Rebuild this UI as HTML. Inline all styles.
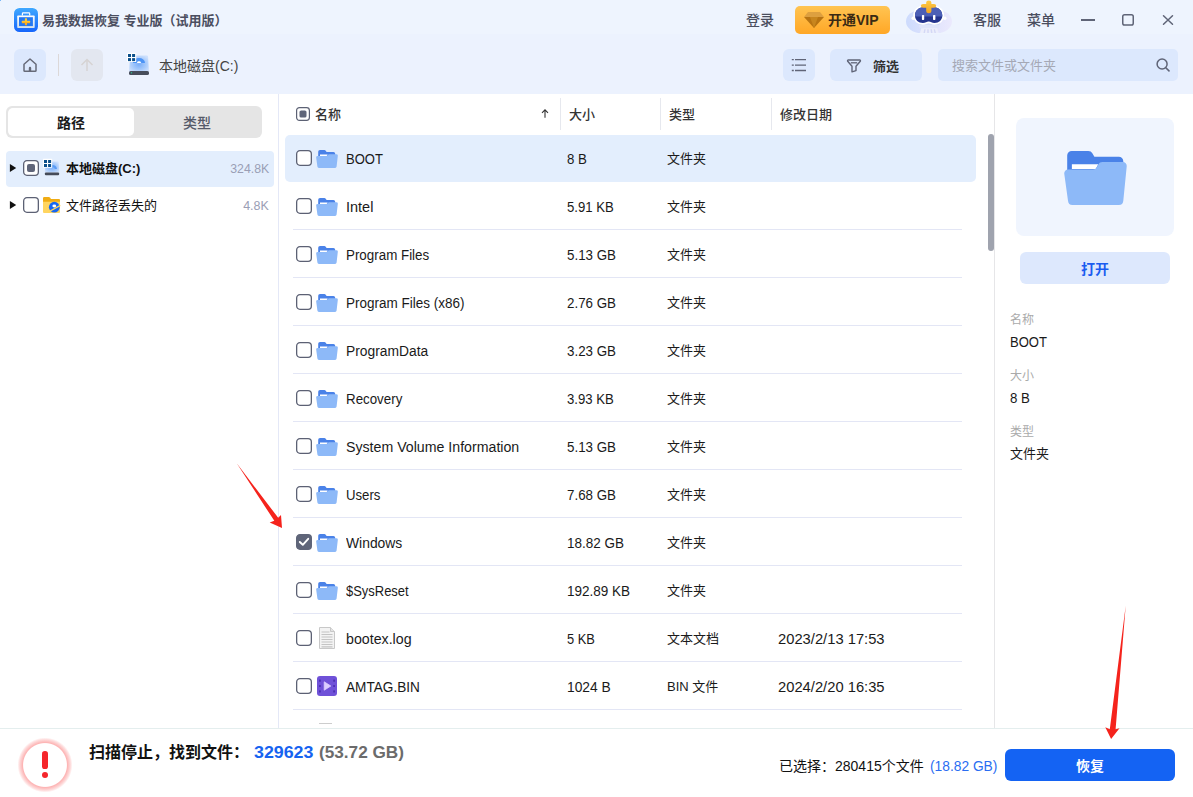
<!DOCTYPE html>
<html lang="zh-CN">
<head>
<meta charset="utf-8">
<title>易我数据恢复 专业版 (试用版)</title>
<style>
*{box-sizing:border-box;margin:0;padding:0}
html,body{width:1193px;height:797px;overflow:hidden;background:#fff}
body{font-family:"Liberation Sans","Noto Sans CJK SC",sans-serif;font-size:14px;color:#1a1a1a;position:relative}
.abs{position:absolute}
#top{left:0;top:0;width:1193px;height:94px;background:linear-gradient(#eef4fe 0,#eef4fe 34px,#ecf2fe 34px,#ecf2fe 100%)}
.t{position:absolute;white-space:nowrap;line-height:20px;height:20px;transform-origin:0 50%}
.btn{position:absolute;border-radius:6px}
/* left */
#tabs{left:6px;top:106px;width:256px;height:32px;border-radius:6px;background:#e5e5e5}
#tabA{left:8px;top:108px;width:126px;height:28px;border-radius:5px;background:#fff}
.trow{position:absolute;left:6px;width:268px;height:36px;border-radius:4px}
.cb{position:absolute;width:16px;height:16px;border-radius:3.500px;background:#fff;box-shadow:inset 0 0 0 1.400px #5c6174}
.line{position:absolute;left:293px;width:669px;height:1px;background:#e3e6f5}
.row{position:absolute;left:285px;width:691px;height:47px}
.row .t{top:14px}
.row .c{font-size:13px}
.gray{color:#aaa}
</style>
</head>
<body>
<div id="top" class="abs"></div>
<div class="abs" style="left:0;top:0;width:1px;height:1px;background:#7ab8f8"></div>

<!-- title bar -->
<svg class="abs" style="left:13px;top:7px" width="26" height="26" viewBox="-1 -1 26 26">
<defs><linearGradient id="lg" x1="0" y1="0" x2="0" y2="1"><stop offset="0" stop-color="#3fa8ff"/><stop offset="1" stop-color="#1766fb"/></linearGradient><linearGradient id="lg2" x1="0" y1="0" x2="0" y2="1"><stop offset="0" stop-color="#ffffff"/><stop offset="1" stop-color="#d3e1ec"/></linearGradient><linearGradient id="lg3" x1="0" y1="0" x2="0" y2="1"><stop offset="0" stop-color="#ffd43a"/><stop offset="1" stop-color="#ffa414"/></linearGradient></defs>
<rect x="-.5" y="-.5" width="25" height="25" rx="6" fill="#fff" opacity=".75"/><rect width="24" height="24" rx="5.500" fill="url(#lg)"/>
<path d="M8.400 7.600V5.600a.8.800 0 0 1 .8-.8h5.700a.8.800 0 0 1 .8.800V7.600" fill="none" stroke="#fff" stroke-width="1.200"/>
<rect x="3.200" y="7.400" width="17.500" height="12.700" rx=".8" fill="url(#lg2)"/>
<rect x="5" y="9.200" width="13.900" height="8.900" fill="#2478f2"/>
<rect x="10.900" y="10.200" width="2.100" height="7.100" rx=".5" fill="url(#lg3)"/><rect x="7.800" y="12.800" width="8.300" height="2.400" rx=".5" fill="url(#lg3)"/>
</svg>
<div class="t" style="left:42px;top:11px;font-size:13px;font-weight:700;color:#4b4e60">易我数据恢复 专业版（试用版）</div>

<div class="t" style="left:746px;top:10px;font-size:14px;font-weight:500;color:#4a4e5e">登录</div>
<div class="btn" style="left:795px;top:6px;width:95px;height:28px;background:linear-gradient(#ffc452,#ffa726);border-radius:5px"></div>
<svg class="abs" style="left:804px;top:12px" width="20" height="16" viewBox="0 0 20 16"><path d="M0 5h20L10 16z" fill="#b87412"/><path d="M4 0h12l4 5H0z" fill="#dda040"/><path d="M6 5l4 11 4-11z" fill="#c8861e"/></svg>
<div class="t" style="left:828px;top:10px;font-size:14px;font-weight:700;color:#3a2a14">开通VIP</div>

<!-- robot avatar -->
<svg class="abs" style="left:900px;top:0" width="60" height="36" viewBox="900 0 60 36">
<defs><linearGradient id="rg" x1="0" y1="0" x2="1" y2="0"><stop offset="0" stop-color="#cddbfd"/><stop offset=".55" stop-color="#dfe3fc"/><stop offset="1" stop-color="#ebe9fd"/></linearGradient>
<linearGradient id="sg" x1="0" y1="0" x2="0" y2="1"><stop offset="0" stop-color="#ffcb45"/><stop offset="1" stop-color="#f0a426"/></linearGradient></defs>
<rect x="906" y="10" width="46" height="23" rx="15" ry="11.500" fill="url(#rg)"/>
<path d="M920 33l1.300-4.800h15.800L938.700 33z" fill="#eceefb"/>
<path d="M923.500 33l.8-3.800h1.400l-.8 3.800zM927.300 33v-3.800h1.400V33zM931 33l-.5-3.800h1.400l.6 3.800zM934.500 33l-.8-3.800h1.300l.9 3.800z" fill="#d3d8f5"/>
<path d="M918.600 22h21.100l-.8 5.200a1 1 0 0 1-1 .8h-17.500a1 1 0 0 1-1-.8z" fill="#dfe5fb"/>
<path d="M918.600 22.500h21.100l-.3 2.500h-20.500z" fill="#c9d3f8" opacity=".6"/>
<path d="M915 15.500c0-5 4-8.500 9.500-8.500h8.300c5.500 0 9.500 3.500 9.500 8.500 0 4.600-3.300 7.400-7.800 7.400-2.600 0-3.800-1.400-5.800-1.400s-3.200 1.400-5.800 1.400c-4.500 0-7.900-2.800-7.900-7.400z" fill="#fff" stroke="#fff" stroke-width="3.600" stroke-linejoin="round"/><circle cx="913.200" cy="18.300" r="1.700" fill="#fff"/><circle cx="944.800" cy="18.300" r="1.700" fill="#fff"/>
<path d="M915 15.500c0-5 4-8.500 9.500-8.500h8.300c5.500 0 9.500 3.500 9.500 8.500 0 4.600-3.300 7.400-7.800 7.400-2.600 0-3.800-1.400-5.800-1.400s-3.200 1.400-5.800 1.400c-4.500 0-7.900-2.800-7.900-7.400z" fill="#25358f"/>
<path d="M915 15.500c0-5 4-8.500 9.500-8.500h8.300c5.500 0 9.500 3.500 9.500 8.500 0 .4 0 .8-.1 1.100h-27.100c-.1-.3-.1-.7-.1-1.100z" fill="#4c5fb6"/>
<rect x="921.900" y="15.100" width="2.300" height="4.800" rx=".7" fill="#fff"/><rect x="933" y="15.100" width="2.400" height="4.800" rx=".7" fill="#fff"/>
<path d="M926.200 2.600a2.600 2.100 0 0 1 5.200 0v1.300h2.600a2.200 1.950 0 0 1 0 3.900h-2.600v3.500a2.600 2 0 0 1-5.200 0V7.800h-3.100a2.200 1.950 0 0 1 0-3.900h3.100z" fill="url(#sg)"/>
</svg>

<div class="t" style="left:973px;top:10px;font-size:14px;font-weight:500;color:#4a4e5e">客服</div>
<div class="t" style="left:1027px;top:10px;font-size:14px;font-weight:500;color:#4a4e5e">菜单</div>
<div class="abs" style="left:1081px;top:19.200px;width:14px;height:1.600px;background:#5f6477"></div>
<svg class="abs" style="left:1121px;top:13px" width="14" height="14" viewBox="0 0 14 14"><rect x="1.750" y="1.750" width="10.500" height="10.200" rx="1.800" fill="none" stroke="#5f6477" stroke-width="1.500"/></svg>
<svg class="abs" style="left:1162px;top:14px" width="12" height="12" viewBox="0 0 12 12"><path d="M1.500 1.700l9 8.600M10.500 1.700L1.500 10.300" stroke="#5f6477" stroke-width="1.500" stroke-linecap="round"/></svg>

<!-- toolbar -->
<div class="btn" style="left:14px;top:49px;width:32px;height:32px;background:#dce8fd"></div>
<svg class="abs" style="left:22px;top:57px" width="16" height="16" viewBox="0 0 16 16"><path d="M2 7.200L8 2l6 5.200V13.400a.8.800 0 0 1-.8.800H2.800a.8.800 0 0 1-.8-.8z" fill="none" stroke="#666a78" stroke-width="1.5" stroke-linejoin="round"/><path d="M6.800 14.200V11a1.200 1.200 0 0 1 2.400 0v3.200z" fill="#666a78"/></svg>
<div class="abs" style="left:58px;top:54px;width:1px;height:22px;background:#dcd8d8"></div>
<div class="btn" style="left:71px;top:49px;width:32px;height:32px;background:#e3e7f0"></div>
<svg class="abs" style="left:79px;top:57px" width="16" height="16" viewBox="0 0 16 16"><path d="M8 14V2.500M2.500 8L8 2.500 13.500 8" fill="none" stroke="#d6d3d3" stroke-width="1.5"/></svg>

<!-- disk icon -->
<svg class="abs" style="left:126px;top:52px" width="24" height="24" viewBox="126 52 24 24">
<defs><radialGradient id="dg" cx="50%" cy="55%" r="60%"><stop offset="0" stop-color="#7aaef8"/><stop offset=".55" stop-color="#a5c9fb"/><stop offset="1" stop-color="#cde0fd"/></radialGradient></defs>
<path d="M131.500 55.600h15.200a1.400 1.400 0 0 1 1.400 1.300l.9 14.600h-20l1.100-14.600a1.400 1.400 0 0 1 1.400-1.300z" fill="url(#dg)"/>
<path d="M133 63a6 5 0 0 1 12 0h-3.600a2.400 1.800 0 0 0-4.800 0z" fill="#4d94f5"/>
<path d="M137 63a2 1.700 0 0 1 4 0z" fill="#fff"/>
<rect x="129" y="71" width="20" height="4" rx="1.600" fill="#474d5b"/><circle cx="131.500" cy="72.700" r=".7" fill="#2fbf8f"/>
<rect x="126.900" y="52.800" width="9.300" height="9.200" rx=".6" fill="#fff"/>
<rect x="128" y="54" width="3" height="3" fill="#0b4f8a"/><rect x="132.100" y="54" width="3" height="3" fill="#0b4f8a"/><rect x="128" y="58.100" width="3" height="3" fill="#0b4f8a"/><rect x="132.100" y="58.100" width="3" height="3" fill="#0b4f8a"/>
</svg>
<div class="t" style="left:159px;top:56px;font-size:14px;color:#444">本地磁盘(C:)</div>

<div class="btn" style="left:783px;top:49px;width:32px;height:32px;background:#dce8fd"></div>
<svg class="abs" style="left:791px;top:58px" width="16" height="14" viewBox="0 0 16 14"><g stroke="#5f6477" stroke-width="1.300"><path d="M4 1.600H15M4 7.100H15M4 12.500H15M.8 1.600h2M.8 7.100h2M.8 12.500h2"/></g></svg>
<div class="btn" style="left:830px;top:49px;width:92px;height:32px;background:#dce8fd"></div>
<svg class="abs" style="left:846px;top:58px" width="16" height="15" viewBox="0 0 16 15"><path d="M2.300 2h11.400a.8.800 0 0 1 .6 1.300L10 8.300v4.300l-4 1.200V8.300L1.700 3.300A.8.800 0 0 1 2.300 2z" fill="none" stroke="#5f6477" stroke-width="1.400" stroke-linejoin="round"/><path d="M4.800 4.800h6.400" stroke="#5f6477" stroke-width="1.300"/></svg>
<div class="t" style="left:873px;top:57px;font-size:13px;font-weight:700;color:#333">筛选</div>
<div class="btn" style="left:938px;top:48.500px;width:240px;height:32.500px;border-radius:5px;background:#dce8fd"></div>
<div class="t" style="left:952px;top:56px;font-size:13px;color:#a5a8b5">搜索文件或文件夹</div>
<svg class="abs" style="left:1155px;top:57px" width="16" height="16" viewBox="0 0 16 16"><circle cx="7.100" cy="7" r="5" fill="none" stroke="#5f6477" stroke-width="1.500"/><path d="M10.800 10.800L14 13.900" stroke="#5f6477" stroke-width="1.600" stroke-linecap="round"/></svg>

<!-- LEFT PANEL -->
<div id="tabs" class="abs"></div><div id="tabA" class="abs"></div>
<div class="t" style="left:57px;top:113px;font-size:14px;font-weight:700;color:#1a1a1a">路径</div>
<div class="t" style="left:183px;top:113px;font-size:14px;font-weight:500;color:#555a69">类型</div>
<div class="trow" style="top:151px;background:#e3eefd"></div>
<div class="abs" style="left:278px;top:94px;width:1px;height:635px;background:#e4e8f7"></div>

<!-- list header -->
<svg class="abs" style="left:296px;top:107px" width="14" height="14" viewBox="0 0 14 14"><rect x=".6" y=".6" width="12.800" height="12.800" rx="2.800" fill="#fff" stroke="#5c6174" stroke-width="1.200"/><rect x="3.500" y="3.500" width="7" height="7" rx="1.600" fill="#5f6579"/></svg>
<div class="t" style="left:315px;top:105px;font-size:13px;font-weight:500;color:#333">名称</div>
<svg class="abs" style="left:541px;top:108.500px" width="8" height="9" viewBox="0 0 8 9"><path d="M4 8.700V1M1 3.900L4 .9 7 3.900" fill="none" stroke="#333" stroke-width="1.100"/></svg>
<div class="abs" style="left:560px;top:98px;width:1px;height:32px;background:#e6e8ee"></div>
<div class="t" style="left:569px;top:105px;font-size:13px;font-weight:500;color:#333">大小</div>
<div class="abs" style="left:660px;top:98px;width:1px;height:32px;background:#e6e8ee"></div>
<div class="t" style="left:669px;top:105px;font-size:13px;font-weight:500;color:#333">类型</div>
<div class="abs" style="left:771px;top:98px;width:1px;height:32px;background:#e6e8ee"></div>
<div class="t" style="left:780px;top:105px;font-size:13px;font-weight:500;color:#333">修改日期</div>
<!-- tree -->
<svg class="abs" style="left:9px;top:163px" width="8" height="10" viewBox="0 0 8 10"><path d="M.9 1L7.200 5 .9 9z" fill="#111"/></svg>
<svg class="abs" style="left:23px;top:160px" width="16" height="16"><use href="#cb"/></svg>
<div class="abs" style="left:27px;top:164px;width:8px;height:8px;border-radius:2px;background:#5f6579"></div>
<svg class="abs" style="left:42px;top:158px" width="19" height="19" viewBox="42 158 19 19">
<path d="M46.300 161.500h11.400a1 1 0 0 1 1 .9l.5 10h-14.400l.5-10a1 1 0 0 1 1-.9z" fill="url(#dg)"/>
<path d="M52 165a5 4.500 0 0 1 5 4h-2.200a2.800 2.300 0 0 0-2.800-2z" fill="#5a9cf5"/>
<rect x="44.800" y="172.400" width="14.400" height="2.800" rx="1.200" fill="#454b59"/>
<rect x="42.900" y="158.800" width="9.300" height="8.900" rx=".6" fill="#fff"/>
<rect x="44" y="160" width="3" height="3" fill="#0b4f8a"/><rect x="48.100" y="160" width="3" height="3" fill="#0b4f8a"/><rect x="44" y="164" width="3" height="3" fill="#0b4f8a"/><rect x="48.100" y="164" width="3" height="3" fill="#0b4f8a"/>
</svg>
<div class="t" style="left:66px;top:159px;font-size:13px;font-weight:700;color:#111">本地磁盘(C:)</div>
<div class="t" style="right:924px;top:159px;transform-origin:100% 50%;font-size:13px;color:#9a9eb5;transform:scaleX(0.947)">324.8K</div>
<svg class="abs" style="left:9px;top:200.400px" width="8" height="10" viewBox="0 0 8 10"><path d="M.9 1L7.200 5 .9 9z" fill="#111"/></svg>
<svg class="abs" style="left:23px;top:197px" width="16" height="16"><use href="#cb"/></svg>
<svg class="abs" style="left:42px;top:196px" width="20" height="18" viewBox="42 196 20 18">
<path d="M43 198.200a1.200 1.200 0 0 1 1.200-1.200h4.600c.5 0 .9.200 1.200.6l1 1.400h8a1 1 0 0 1 1 1V203H43z" fill="#f0ac14"/>
<path d="M43 201.700h17V212a1 1 0 0 1-1 1H44a1 1 0 0 1-1-1z" fill="#ffd560"/>
<path d="M43 199h17v2.700H43z" fill="#f6ba2c" opacity=".0"/>
<circle cx="54.300" cy="207.200" r="5.400" fill="#1767f2"/>
<ellipse cx="54.300" cy="206" rx="1.900" ry="1.400" fill="#fff"/>
<path d="M48 212.200l12.300-6.800" stroke="#ffd560" stroke-width="1.300"/>
<path d="M55 208.200h4.200" stroke="#ffd560" stroke-width="0"/>
</svg>
<div class="t" style="left:66px;top:196px;font-size:13px;color:#111">文件路径丢失的</div>
<div class="t" style="right:924px;top:196px;transform-origin:100% 50%;font-size:13px;color:#9a9eb5;transform:scaleX(0.957)">4.8K</div>
<!-- FILE LIST -->
<div id="list">
<svg width="0" height="0" style="position:absolute"><defs>
<symbol id="fold" viewBox="0 0 22 18"><path d="M2.200 1.800A1.800 1.800 0 0 1 4 0h4.300c.7 0 1.200.3 1.600.9l.7 1.100h6.800a1.800 1.800 0 0 1 1.800 1.800V8H2.200z" fill="#4a82e8"/><path d="M4 4.600h7.700l-.9 1.600H4z" fill="#fff"/><path d="M.200 7.700A1.500 1.500 0 0 1 1.700 6h8.500c.6 0 1-.2 1.300-.7l.3-.4c.3-.5.700-.7 1.300-.7h7.200a1.500 1.500 0 0 1 1.500 1.700l-1.200 10.700a1.600 1.600 0 0 1-1.600 1.400H3a1.600 1.600 0 0 1-1.600-1.400z" fill="#8db9f8"/></symbol>
<symbol id="cb" viewBox="0 0 16 16"><rect x=".65" y=".65" width="14.700" height="14.700" rx="3.300" fill="#fff" stroke="#5c6174" stroke-width="1.300"/></symbol><symbol id="cbk" viewBox="0 0 16 16"><rect x=".65" y=".65" width="14.700" height="14.700" rx="3.300" fill="#5f6579" stroke="#5f6579" stroke-width="1.300"/><path d="M3.800 8l3 2.800 5.400-6" fill="none" stroke="#fff" stroke-width="1.900" stroke-linecap="round" stroke-linejoin="round"/></symbol>
</defs></svg>
<div class="row" style="top:135px;background:#e3eefd;border-radius:5px">
<svg class="abs" style="left:11px;top:15px" width="16" height="16"><use href="#cb"/></svg>
<svg class="abs" style="left:31px;top:15px" width="22" height="18"><use href="#fold"/></svg>
<div class="t" style="left:61px;transform:scaleX(0.933)">BOOT</div><div class="t" style="left:282px;transform:scaleX(0.947)">8 B</div><div class="t c" style="left:382px">文件夹</div>
</div>
<div class="row" style="top:183px">
<svg class="abs" style="left:11px;top:15px" width="16" height="16"><use href="#cb"/></svg>
<svg class="abs" style="left:31px;top:15px" width="22" height="18"><use href="#fold"/></svg>
<div class="t" style="left:61px;transform:scaleX(1.035)">Intel</div><div class="t" style="left:282px;transform:scaleX(0.939)">5.91 KB</div><div class="t c" style="left:382px">文件夹</div>
</div>
<div class="line" style="top:229px"></div>
<div class="row" style="top:231px">
<svg class="abs" style="left:11px;top:15px" width="16" height="16"><use href="#cb"/></svg>
<svg class="abs" style="left:31px;top:15px" width="22" height="18"><use href="#fold"/></svg>
<div class="t" style="left:61px;transform:scaleX(0.955)">Program Files</div><div class="t" style="left:282px;transform:scaleX(0.954)">5.13 GB</div><div class="t c" style="left:382px">文件夹</div>
</div>
<div class="line" style="top:277px"></div>
<div class="row" style="top:279px">
<svg class="abs" style="left:11px;top:15px" width="16" height="16"><use href="#cb"/></svg>
<svg class="abs" style="left:31px;top:15px" width="22" height="18"><use href="#fold"/></svg>
<div class="t" style="left:61px;transform:scaleX(0.963)">Program Files (x86)</div><div class="t" style="left:282px;transform:scaleX(0.954)">2.76 GB</div><div class="t c" style="left:382px">文件夹</div>
</div>
<div class="line" style="top:325px"></div>
<div class="row" style="top:327px">
<svg class="abs" style="left:11px;top:15px" width="16" height="16"><use href="#cb"/></svg>
<svg class="abs" style="left:31px;top:15px" width="22" height="18"><use href="#fold"/></svg>
<div class="t" style="left:61px;transform:scaleX(0.987)">ProgramData</div><div class="t" style="left:282px;transform:scaleX(0.954)">3.23 GB</div><div class="t c" style="left:382px">文件夹</div>
</div>
<div class="line" style="top:373px"></div>
<div class="row" style="top:375px">
<svg class="abs" style="left:11px;top:15px" width="16" height="16"><use href="#cb"/></svg>
<svg class="abs" style="left:31px;top:15px" width="22" height="18"><use href="#fold"/></svg>
<div class="t" style="left:61px;transform:scaleX(0.952)">Recovery</div><div class="t" style="left:282px;transform:scaleX(0.939)">3.93 KB</div><div class="t c" style="left:382px">文件夹</div>
</div>
<div class="line" style="top:421px"></div>
<div class="row" style="top:423px">
<svg class="abs" style="left:11px;top:15px" width="16" height="16"><use href="#cb"/></svg>
<svg class="abs" style="left:31px;top:15px" width="22" height="18"><use href="#fold"/></svg>
<div class="t" style="left:61px;transform:scaleX(1.012)">System Volume Information</div><div class="t" style="left:282px;transform:scaleX(0.954)">5.13 GB</div><div class="t c" style="left:382px">文件夹</div>
</div>
<div class="line" style="top:469px"></div>
<div class="row" style="top:471px">
<svg class="abs" style="left:11px;top:15px" width="16" height="16"><use href="#cb"/></svg>
<svg class="abs" style="left:31px;top:15px" width="22" height="18"><use href="#fold"/></svg>
<div class="t" style="left:61px;transform:scaleX(0.941)">Users</div><div class="t" style="left:282px;transform:scaleX(0.954)">7.68 GB</div><div class="t c" style="left:382px">文件夹</div>
</div>
<div class="line" style="top:517px"></div>
<div class="row" style="top:519px">
<svg class="abs" style="left:11px;top:15px" width="16" height="16"><use href="#cbk"/></svg>
<svg class="abs" style="left:31px;top:15px" width="22" height="18"><use href="#fold"/></svg>
<div class="t" style="left:61px;transform:scaleX(0.991)">Windows</div><div class="t" style="left:282px;transform:scaleX(0.964)">18.82 GB</div><div class="t c" style="left:382px">文件夹</div>
</div>
<div class="line" style="top:565px"></div>
<div class="row" style="top:567px">
<svg class="abs" style="left:11px;top:15px" width="16" height="16"><use href="#cb"/></svg>
<svg class="abs" style="left:31px;top:15px" width="22" height="18"><use href="#fold"/></svg>
<div class="t" style="left:61px;transform:scaleX(0.925)">$SysReset</div><div class="t" style="left:282px;transform:scaleX(0.965)">192.89 KB</div><div class="t c" style="left:382px">文件夹</div>
</div>
<div class="line" style="top:613px"></div>
<div class="row" style="top:615px">
<svg class="abs" style="left:11px;top:15px" width="16" height="16"><use href="#cb"/></svg>
<svg class="abs" style="left:34px;top:12px" width="16" height="22" viewBox="0 0 16 22"><path d="M.5.500h11l4 4v17H.5z" fill="#f3f3f3" stroke="#c8c8c8"/><path d="M11.500.5v4h4" fill="#e4e4e4" stroke="#c8c8c8"/><g stroke="#c4c4c4" stroke-width="1.200"><path d="M2.500 5h8M2.500 7.500h11M2.500 10h11M2.500 12.500h11M2.500 15h11M2.500 17.500h11M2.500 19.800h11"/></g></svg>
<div class="t" style="left:61px;transform:scaleX(1.015)">bootex.log</div><div class="t" style="left:282px;transform:scaleX(0.919)">5 KB</div><div class="t c" style="left:382px">文本文档</div>
<div class="t" style="left:493px;transform:scaleX(1.053)">2023/2/13 17:53</div>
</div>
<div class="line" style="top:661px"></div>
<div class="row" style="top:663px">
<svg class="abs" style="left:11px;top:15px" width="16" height="16"><use href="#cb"/></svg>
<svg class="abs" style="left:32px;top:13px" width="20" height="20" viewBox="0 0 20 20"><rect width="20" height="20" rx="3" fill="#6f51d8"/><path d="M7.200 5.800v8.400l6.600-4.200z" fill="#dccdff" stroke="#dccdff" stroke-width=".8" stroke-linejoin="round"/><g fill="#4b2fb2"><rect x="2" y="3.500" width="1.800" height="2.200" rx=".5"/><rect x="2" y="8.900" width="1.800" height="2.200" rx=".5"/><rect x="2" y="14.300" width="1.800" height="2.200" rx=".5"/><rect x="16.200" y="3.500" width="1.800" height="2.200" rx=".5"/><rect x="16.200" y="8.900" width="1.800" height="2.200" rx=".5"/><rect x="16.200" y="14.300" width="1.800" height="2.200" rx=".5"/></g></svg>
<div class="t" style="left:61px;transform:scaleX(0.973)">AMTAG.BIN</div><div class="t" style="left:282px;transform:scaleX(0.985)">1024 B</div><div class="t c" style="left:382px">BIN 文件</div>
<div class="t" style="left:493px;transform:scaleX(1.053)">2024/2/20 16:35</div>
</div>
<div class="line" style="top:709px"></div>
<div class="abs" style="left:319px;top:723px;width:13px;height:1px;background:#cdcdcd"></div>
</div><!--endlist-->

<!-- RIGHT PANEL -->
<div class="abs" style="left:994px;top:94px;width:1px;height:635px;background:#e6e6e8"></div>
<div class="abs" style="left:988px;top:134px;width:6px;height:117px;border-radius:3px;background:#9fa3ae"></div>
<div class="abs" style="left:1016px;top:118px;width:158px;height:118px;border-radius:8px;background:#f0f5fe"></div>
<svg class="abs" style="left:1064px;top:151px" width="63" height="54" viewBox="0 0 63 54"><path d="M3.200 4.500A4.500 4.500 0 0 1 7.700 0h16.500c2 0 3.300.8 4.300 2.500l1.900 3.300h24.400a4.500 4.500 0 0 1 4.500 4.500V24H3.200z" fill="#4a82e8"/><path d="M7.900 13.200h26.400l-2.600 4.800H7.900z" fill="#fff"/><path d="M.3 23A4 4 0 0 1 4.300 18.400h24.500c2 0 3-.6 4-2.200l1.600-2.800c1-1.600 2-2.400 4-2.400h20.300a4 4 0 0 1 4 4.500l-3.400 34.300a4.500 4.500 0 0 1-4.500 4.200H8.500A4.500 4.500 0 0 1 4 49.800z" fill="#8db9f8"/></svg>
<div class="btn" style="left:1020px;top:252px;width:150px;height:32px;background:#dde8fd"></div>
<div class="t" style="left:1081px;top:259px;font-size:14px;font-weight:700;color:#1a5cf0">打开</div>
<div class="t gray" style="left:1010px;top:310px;font-size:12px">名称</div>
<div class="t" style="left:1010px;top:332px;font-size:14px;transform:scaleX(0.933)">BOOT</div>
<div class="t gray" style="left:1010px;top:366px;font-size:12px">大小</div>
<div class="t" style="left:1010px;top:388px;font-size:14px;transform:scaleX(0.947)">8 B</div>
<div class="t gray" style="left:1010px;top:422px;font-size:12px">类型</div>
<div class="t" style="left:1010px;top:444px;font-size:13px">文件夹</div>

<!-- BOTTOM BAR -->
<div class="abs" style="left:0;top:728px;width:1193px;height:69px;background:#fff;border-top:1px solid #e4eeee"></div>
<div class="abs" style="left:17px;top:737px;width:56px;height:56px;border-radius:50%;background:radial-gradient(circle closest-side,#fff 0,#fff 76.500%,#fdb4b4 80%,#fdcaca 86%,#fee0e0 92%,rgba(255,240,240,0) 98%)"></div>
<div class="abs" style="left:42.200px;top:751.200px;width:5.700px;height:18.300px;border-radius:2.850px;background:#f5262b"></div>
<div class="abs" style="left:42px;top:772.300px;width:6.200px;height:6.200px;border-radius:50%;background:#f5262b"></div>
<div class="t" style="left:89px;top:743px;font-size:16px;font-weight:700;color:#111">扫描停止，找到文件：</div>
<div class="t" style="left:254px;top:743px;font-size:16px;font-weight:700;color:#1663f0;transform:scaleX(1.113)">329623</div>
<div class="t" style="left:319px;top:743px;font-size:16px;font-weight:700;color:#6b6b6b;transform:scaleX(1.074)">(53.72 GB)</div>
<div class="t" style="left:779px;top:756px;font-size:14px;color:#111">已选择：280415个文件</div>
<div class="t" style="left:930px;top:756px;font-size:14px;color:#2a6df2;transform:scaleX(0.984)">(18.82 GB)</div>
<div class="btn" style="left:1005px;top:749px;width:170px;height:32px;background:#1463f3"></div>
<div class="t" style="left:1076px;top:756px;font-size:14px;font-weight:700;color:#fff">恢复</div>
<!-- arrows -->
<svg class="abs" style="left:0;top:0;pointer-events:none" width="1193" height="797" viewBox="0 0 1193 797"><path d="M236.700 463.300L278.200 517.800 281 515 282 528 269.700 522.500 274.300 520.800z" fill="#f5231c"/><path d="M1125.700 605.700L1115.600 729.200 1119.500 728.300 1111.100 739 1105.300 727.300 1109.800 729.200z" fill="#f5231c"/></svg>
</body>
</html>
